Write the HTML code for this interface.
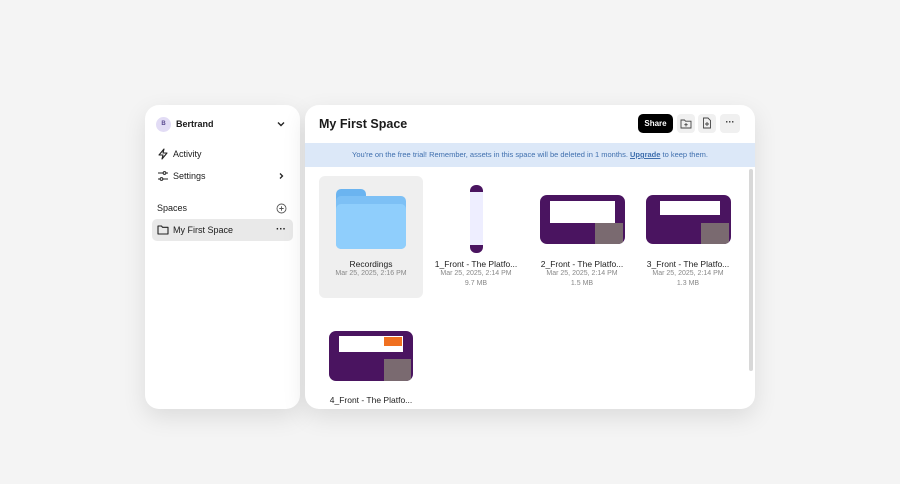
<!DOCTYPE html><html><head><style>
*{margin:0;padding:0;box-sizing:border-box}
body{width:900px;height:484px;background:#f4f4f4;font-family:"Liberation Sans",sans-serif;position:relative;overflow:hidden;color:#1a1a1a}
.panel{position:absolute;background:#fff;border-radius:14px;box-shadow:0 8px 24px rgba(0,0,0,.10);overflow:hidden}
.a{position:absolute}
.t{font-size:9px;white-space:nowrap}
.cap{position:absolute;text-align:center;width:110px;font-size:8.5px;color:#222}
.sub{position:absolute;text-align:center;width:110px;font-size:7px;color:#888;line-height:10px}
.thumb{position:absolute;background:#4a1460;border-radius:7px;overflow:hidden}
</style></head><body>
<div class="panel" style="left:145px;top:105px;width:155px;height:304px">
 <div class="a" style="left:11px;top:12px;width:15px;height:15px;border-radius:50%;background:#e2dcf5;font-size:6px;text-align:center;line-height:15px;color:#5a4a90;font-weight:bold">B</div>
 <div class="a t" style="left:31px;top:14px;font-size:9px;font-weight:bold">Bertrand</div>
 <svg class="a" style="left:131px;top:14px" width="10" height="10" viewBox="0 0 10 10"><path d="M2 3.5l3 3 3-3" fill="none" stroke="#222" stroke-width="1.4"/></svg>
 <svg class="a" style="left:12px;top:43px" width="12" height="12" viewBox="0 0 12 12"><path d="M7 1L2 7h4l-1 4 5-6H6z" fill="none" stroke="#222" stroke-width="1.1" stroke-linejoin="round"/></svg>
 <div class="a t" style="left:28px;top:44px">Activity</div>
 <svg class="a" style="left:12px;top:65px" width="12" height="12" viewBox="0 0 12 12"><path d="M1 3h5M9 3h2M1 9h2M6 9h5" stroke="#222" stroke-width="1.1"/><circle cx="7.5" cy="3" r="1.4" fill="none" stroke="#222"/><circle cx="4.5" cy="9" r="1.4" fill="none" stroke="#222"/></svg>
 <div class="a t" style="left:28px;top:66px">Settings</div>
 <svg class="a" style="left:132px;top:67px" width="8" height="8" viewBox="0 0 8 8"><path d="M3 1.5l2.5 2.5L3 6.5" fill="none" stroke="#222" stroke-width="1.3"/></svg>
 <div class="a t" style="left:12px;top:98px">Spaces</div>
 <svg class="a" style="left:131px;top:98px" width="11" height="11" viewBox="0 0 11 11"><circle cx="5.5" cy="5.5" r="4.5" fill="none" stroke="#555" stroke-width=".9"/><path d="M5.5 3.3v4.4M3.3 5.5h4.4" stroke="#555" stroke-width=".9"/></svg>
 <div class="a" style="left:7px;top:114px;width:141px;height:22px;background:#e9e9e9;border-radius:5px"></div>
 <svg class="a" style="left:12px;top:119px" width="12" height="11" viewBox="0 0 12 11"><path d="M1 2h3.5l1 1.3H11V10H1z" fill="none" stroke="#222" stroke-width="1.1" stroke-linejoin="round"/></svg>
 <div class="a t" style="left:28px;top:120px">My First Space</div>
 <div class="a t" style="left:131px;top:119px;font-weight:bold;font-size:10px">···</div>
</div>
<div class="panel" style="left:305px;top:105px;width:450px;height:304px">
 <div class="a" style="left:14px;top:12px;font-size:12.5px;font-weight:bold">My First Space</div>
 <div class="a" style="left:333px;top:9px;width:35px;height:19px;background:#000;border-radius:5px;color:#fff;font-size:8px;text-align:center;line-height:19px;font-weight:bold">Share</div>
 <div class="a" style="left:372px;top:9px;width:18px;height:19px;background:#f0f0f0;border-radius:4px"></div>
 <svg class="a" style="left:375px;top:13px" width="12" height="11" viewBox="0 0 12 11"><path d="M1 2h3.5l1 1.2H11V10H1z" fill="none" stroke="#444" stroke-width=".9"/><path d="M6 5v3.5M4.3 6.7h3.4" stroke="#444" stroke-width=".9"/></svg>
 <div class="a" style="left:393px;top:9px;width:18px;height:19px;background:#f0f0f0;border-radius:4px"></div>
 <svg class="a" style="left:397px;top:12px" width="10" height="12" viewBox="0 0 10 12"><path d="M1.5 1h4.5l2.5 2.5V11h-7z" fill="none" stroke="#444" stroke-width=".9"/><path d="M5 5v4M3 7h4" stroke="#444" stroke-width=".9"/></svg>
 <div class="a" style="left:415px;top:9px;width:20px;height:19px;background:#f0f0f0;border-radius:4px;font-size:9px;text-align:center;line-height:17px;font-weight:bold">···</div>
 <div class="a" style="left:0;top:38px;width:450px;height:24px;background:#dce8f8;font-size:7.5px;color:#3f6fae;text-align:center;line-height:24px">You're on the free trial! Remember, assets in this space will be deleted in 1 months. <u style="font-weight:bold">Upgrade</u> to keep them.</div>
 <div class="a" style="left:444px;top:64px;width:4px;height:202px;background:#d8d8d8;border-radius:2px"></div>
 <div class="a" style="left:14px;top:71px;width:104px;height:122px;background:#efefef;border-radius:6px"></div>
 <div class="a" style="left:31px;top:84px;width:30px;height:14px;background:#6bb4f0;border-radius:5px 5px 0 0"></div>
 <div class="a" style="left:31px;top:91px;width:70px;height:53px;background:#7dc0f5;border-radius:5px"></div>
 <div class="a" style="left:31px;top:99px;width:70px;height:45px;background:#8fcefc;border-radius:5px"></div>
 <div class="cap" style="left:11px;top:154px">Recordings</div>
 <div class="sub" style="left:11px;top:164px">Mar 25, 2025, 2:16 PM</div>
 <div class="a" style="left:165px;top:80px;width:13px;height:68px;background:linear-gradient(#4a1460 0 10%,#eef 10% 88%,#4a1460 88%);border-radius:6px"></div>
 <div class="cap" style="left:116px;top:154px">1_Front - The Platfo...</div>
 <div class="sub" style="left:116px;top:164px">Mar 25, 2025, 2:14 PM<br>9.7 MB</div>
 <div class="thumb" style="left:235px;top:90px;width:85px;height:49px"><div class="a" style="left:10px;top:6px;width:65px;height:22px;background:#fff"></div><div class="a" style="left:55px;top:28px;width:28px;height:21px;background:#7a6a70"></div></div>
 <div class="cap" style="left:222px;top:154px">2_Front - The Platfo...</div>
 <div class="sub" style="left:222px;top:164px">Mar 25, 2025, 2:14 PM<br>1.5 MB</div>
 <div class="thumb" style="left:341px;top:90px;width:85px;height:49px"><div class="a" style="left:14px;top:6px;width:60px;height:14px;background:#fff"></div><div class="a" style="left:55px;top:28px;width:28px;height:21px;background:#7a6a70"></div></div>
 <div class="cap" style="left:328px;top:154px">3_Front - The Platfo...</div>
 <div class="sub" style="left:328px;top:164px">Mar 25, 2025, 2:14 PM<br>1.3 MB</div>
 <div class="thumb" style="left:24px;top:226px;width:84px;height:50px"><div class="a" style="left:10px;top:5px;width:64px;height:16px;background:#fff"></div><div class="a" style="left:55px;top:6px;width:18px;height:9px;background:#f07020"></div><div class="a" style="left:55px;top:28px;width:27px;height:22px;background:#7a6a70"></div></div>
 <div class="cap" style="left:11px;top:290px">4_Front - The Platfo...</div>
</div>
</body></html>
